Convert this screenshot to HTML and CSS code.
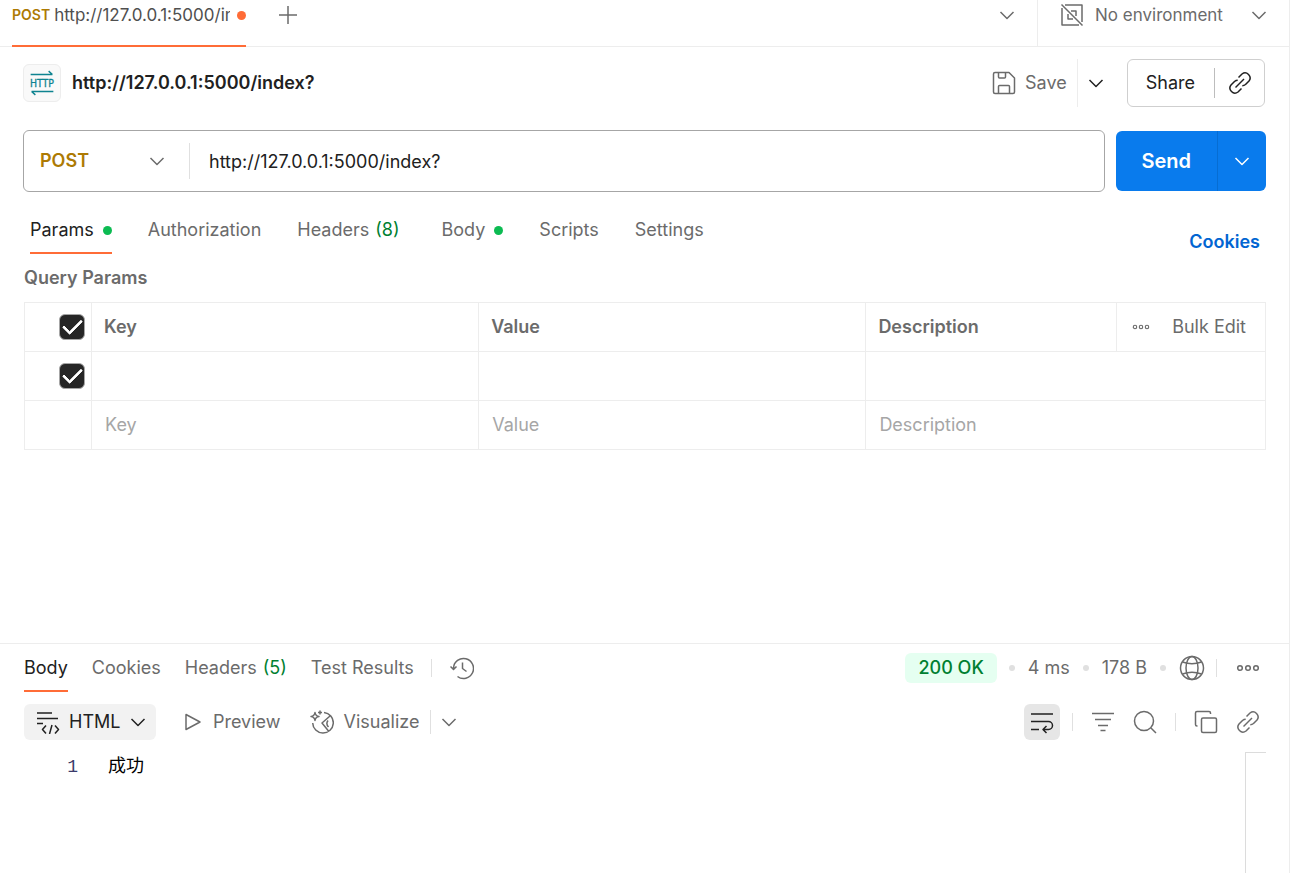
FILE: index.html
```html
<!DOCTYPE html>
<html lang="en">
<head>
    <meta charset="UTF-8">
    <meta name="viewport" content="width=device-width, initial-scale=1.0">
    <title>http://127.0.0.1:5000/index?</title>
    <link rel="stylesheet" href="styles.css">
</head>
<body>
    <!-- shared icons -->
    <svg class="sprite" aria-hidden="true">
        <symbol id="chevron" viewBox="0 0 16 16"><path d="M1.5 5 8 11.5 14.5 5"/></symbol>
        <symbol id="link" viewBox="0 0 24 24">
            <path d="M7.5 16.5 16 8"/>
            <path d="M10.5 6.5 14 3a5 5 0 0 1 7 7l-3.5 3.5q-1.500 1.300-3.200 1.300"/>
            <path d="M13.500 17.500 10 21a5 5 0 0 1-7-7l3.500-3.500q1.500-1.300 3.200-1.300"/>
        </symbol>
        <symbol id="dots" viewBox="0 0 24 24"><circle cx="4" cy="12" r="2.300"/><circle cx="12" cy="12" r="2.300"/><circle cx="20" cy="12" r="2.300"/></symbol>
    </svg>

    <div class="workbench">
        <div class="topbar">
            <div class="tab-strip">
                <a class="file-tab" href="#request">
                    <span class="tab-method">POST</span>
                    <span class="tab-name">http://127.0.0.1:5000/index?</span>
                    <span class="unsaved"></span>
                </a>
            </div>
            <button class="icon-btn new-tab" aria-label="New tab">
                <svg class="icon icon-20" viewBox="0 0 20 20"><path d="M10 1v18M1 10h18"/></svg>
            </button>
            <button class="icon-btn tab-list" aria-label="All tabs"><svg class="icon icon-16"><use href="#chevron"/></svg></button>
            <div class="environment">
                <svg class="icon icon-24" viewBox="0 0 24 24">
                    <path d="M1.500 1.500 22.500 22.500M5 2h17v17M2 5v17h17M11 8h5v5M8 11v5h5"/>
                </svg>
                <label class="select-box env-select">
                    <select aria-label="Environment"><option>No environment</option></select>
                    <svg class="icon icon-16"><use href="#chevron"/></svg>
                </label>
            </div>
        </div>

        <main class="request" id="request">
            <header class="request-header">
                <svg class="http-icon" viewBox="0 0 38 38">
                    <path d="M7 10h23M26 6.500l4 3.500M31 28H8M12 31.500l-4-3.500"/>
                    <text x="19" y="23" text-anchor="middle">HTTP</text>
                </svg>
                <h1>http://127.0.0.1:5000/index?</h1>
                <button class="save">
                    <svg class="icon icon-24" viewBox="0 0 24 24">
                        <path d="M3 1.500h14l5.500 5.500v14q0 1.500-1.500 1.500H3q-1.500 0-1.500-1.500V3Q1.500 1.500 3 1.500ZM6.500 1.500v4.500q0 1 1 1h5q1 0 1-1V1.500M6.500 22.500v-7q0-1 1-1h9q1 0 1 1v7"/>
                    </svg>
                    Save
                </button>
                <button class="icon-btn save-more" aria-label="Save options"><svg class="icon icon-16"><use href="#chevron"/></svg></button>
                <div class="share">
                    <button>Share</button>
                    <button class="icon-btn copy-link" aria-label="Copy link"><svg class="icon icon-24"><use href="#link"/></svg></button>
                </div>
            </header>

            <form class="url-row" onsubmit="return false">
                <div class="url-bar">
                    <label class="select-box method-select">
                        <select aria-label="Method"><option>POST</option><option>GET</option></select>
                        <svg class="icon icon-16"><use href="#chevron"/></svg>
                    </label>
                    <input type="text" aria-label="Request URL" value="http://127.0.0.1:5000/index?">
                </div>
                <div class="send">
                    <button type="submit">Send</button>
                    <button type="button" class="send-more" aria-label="Send options"><svg class="icon icon-16"><use href="#chevron"/></svg></button>
                </div>
            </form>

            <nav class="request-nav">
                <button class="nav-tab active">Params <span class="dot"></span></button>
                <button class="nav-tab">Authorization</button>
                <button class="nav-tab">Headers <span class="count">(8)</span></button>
                <button class="nav-tab">Body <span class="dot"></span></button>
                <button class="nav-tab">Scripts</button>
                <button class="nav-tab">Settings</button>
                <a class="cookies" href="#cookies">Cookies</a>
            </nav>

            <section class="params">
                <h2>Query Params</h2>
                <table>
                    <colgroup>
                        <col class="col-check"><col class="col-key"><col class="col-key"><col><col class="col-bulk">
                    </colgroup>
                    <thead>
                        <tr>
                            <th class="check"><input type="checkbox" aria-label="Select all" checked></th>
                            <th>Key</th>
                            <th>Value</th>
                            <th>Description</th>
                            <th>
                                <div class="bulk">
                                    <button class="icon-btn" aria-label="More"><svg class="icon icon-18"><use href="#dots"/></svg></button>
                                    <button>Bulk Edit</button>
                                </div>
                            </th>
                        </tr>
                    </thead>
                    <tbody>
                        <tr>
                            <td class="check"><input type="checkbox" aria-label="Enable param" checked></td>
                            <td><input type="text" aria-label="Key"></td>
                            <td><input type="text" aria-label="Value"></td>
                            <td colspan="2"><input type="text" aria-label="Description"></td>
                        </tr>
                        <tr>
                            <td></td>
                            <td><input type="text" aria-label="New key" placeholder="Key"></td>
                            <td><input type="text" aria-label="New value" placeholder="Value"></td>
                            <td colspan="2"><input type="text" aria-label="New description" placeholder="Description"></td>
                        </tr>
                    </tbody>
                </table>
            </section>
        </main>

        <section class="response">
            <div class="response-head">
                <nav class="response-nav">
                    <button class="nav-tab active">Body</button>
                    <button class="nav-tab">Cookies</button>
                    <button class="nav-tab">Headers <span class="count">(5)</span></button>
                    <button class="nav-tab">Test Results</button>
                </nav>
                <span class="divider"></span>
                <button class="icon-btn history" aria-label="History">
                    <svg class="icon icon-24" viewBox="0 0 24 24">
                        <path d="M3.500 13V12A10 10 0 1 1 7.500 20.500M.500 10.500l3 3 3-3M12.500 6.500v6l4 3"/>
                    </svg>
                </button>
                <div class="status">
                    <span class="badge">200 OK</span>
                    <span class="sep"></span>
                    <span>4 ms</span>
                    <span class="sep"></span>
                    <span>178 B</span>
                    <span class="sep"></span>
                    <button class="icon-btn network" aria-label="Network">
                        <svg class="icon icon-26" viewBox="0 0 26 26">
                            <circle cx="13" cy="13" r="11.500"/><ellipse cx="13" cy="13" rx="6" ry="11.500"/>
                            <path d="M3.500 7q9.500 3.500 19 0M3.500 19q9.500-3.500 19 0"/>
                        </svg>
                    </button>
                    <span class="divider"></span>
                    <button class="icon-btn more" aria-label="More actions"><svg class="icon icon-24"><use href="#dots"/></svg></button>
                </div>
            </div>

            <div class="toolbar">
                <div class="format">
                    <svg class="icon icon-24" viewBox="0 0 24 24">
                        <path d="M1 3h15M1 8.500h21M1 13.500h6M10 15.500l-3.500 4 3.500 4M19 15.500l3.500 4-3.500 4M16 15l-2.500 9"/>
                    </svg>
                    <label class="select-box format-select">
                        <select aria-label="Format"><option>HTML</option><option>JSON</option></select>
                        <svg class="icon icon-16"><use href="#chevron"/></svg>
                    </label>
                </div>
                <button class="preview">
                    <svg class="icon icon-20" viewBox="0 0 20 20"><path d="M3 2.500v15L17 10Z"/></svg>
                    Preview
                </button>
                <button class="visualize">
                    <svg class="icon icon-24" viewBox="0 0 24 24">
                        <path d="M14 2.500A10.300 10.300 0 1 1 2.700 13M5 2.500Q5.500 6 9 6.500 5.500 7 5 10.500 4.500 7 1 6.500 4.500 6 5 2.500ZM10 .500v4M8 2.500h4M20 6l-8 7 6.500 8M18 10.500q-2.500 3.500.500 6.500"/>
                    </svg>
                    Visualize
                </button>
                <span class="divider tall"></span>
                <button class="icon-btn view-more" aria-label="View options"><svg class="icon icon-16"><use href="#chevron"/></svg></button>
                <div class="tools">
                    <button class="icon-btn wrap active" aria-label="Wrap lines">
                        <svg class="icon icon-24" viewBox="0 0 24 24"><path d="M1 4h22M1 11.500h17.500a4 4 0 0 1 0 8H13M1 19.500h8M16.500 16l-3.500 3.500 3.500 3.500"/></svg>
                    </button>
                    <span class="divider"></span>
                    <button class="icon-btn filter" aria-label="Filter">
                        <svg class="icon icon-24" viewBox="0 0 24 24"><path d="M1 3.500h22M4 9.500h16M7 15.500h10M9.500 20.500h5"/></svg>
                    </button>
                    <button class="icon-btn search" aria-label="Search">
                        <svg class="icon icon-24" viewBox="0 0 24 24"><circle cx="11" cy="11" r="9.500"/><path d="m18 18 5 5"/></svg>
                    </button>
                    <span class="divider"></span>
                    <button class="icon-btn copy" aria-label="Copy">
                        <svg class="icon icon-24" viewBox="0 0 24 24"><rect x="7.500" y="8" width="15" height="14.500" rx="1.500"/><path d="M3.500 16H3q-1.500 0-1.500-1.500V3Q1.500 1.500 3 1.500h12q1.500 0 1.500 1.500v1"/></svg>
                    </button>
                    <button class="icon-btn" aria-label="Copy link"><svg class="icon icon-24"><use href="#link"/></svg></button>
                </div>
            </div>

            <div class="code">
                <span class="line-number">1</span>
                <code>成功</code>
                <div class="minimap"></div>
            </div>
        </section>
    </div>
</body>
</html>
```
FILE: styles.css
```css
* {
    box-sizing: border-box;
}
body {
    margin: 0;
    padding-right: 15px;
    background: #fff;
    color: #212121;
    font: 18px/24px Inter, "Noto Sans CJK SC", sans-serif;
}
button, input, select {
    font: inherit;
    color: inherit;
    background: none;
    border: none;
    padding: 0;
    margin: 0;
}
button, select {
    cursor: pointer;
}
h1, h2 {
    margin: 0;
    font-size: 18px;
    font-weight: 600;
}
.sprite {
    display: none;
}
.icon {
    display: block;
    flex: none;
    width: 24px;
    height: 24px;
    fill: none;
    stroke: currentColor;
    stroke-width: 1.5;
    stroke-linejoin: round;
}
.icon-16 {
    width: 16px;
    height: 16px;
}
.icon-18 {
    width: 18px;
    height: 18px;
}
.icon-20 {
    width: 20px;
    height: 20px;
}
.icon-26 {
    width: 26px;
    height: 26px;
}
.icon-btn {
    display: flex;
    align-items: center;
    justify-content: center;
}
.divider {
    width: 1px;
    height: 18px;
    background: #e0e0e0;
}
.divider.tall {
    height: 24px;
}

/* select with its own chevron */
.select-box {
    display: grid;
    align-items: center;
}
.select-box select, .select-box .icon {
    grid-area: 1 / 1;
}
.select-box select {
    appearance: none;
    width: 100%;
    outline: none;
}
.select-box .icon {
    justify-self: end;
    pointer-events: none;
}

.workbench {
    display: flex;
    flex-direction: column;
    min-height: 100vh;
    border-right: 1px solid #ededed;
}

/* top bar */
.topbar {
    display: flex;
    height: 47px;
    border-bottom: 1px solid #ededed;
    color: #6b6b6b;
}
.topbar .icon-btn {
    height: 30px;
}
.tab-strip {
    width: 258px;
    height: 47px;
    padding: 0 12px;
    border-bottom: 1px solid #ededed;
}
.file-tab {
    display: flex;
    height: 47px;
    padding-top: 3px;
    gap: 4px;
    border-bottom: 2px solid #ff6c37;
    text-decoration: none;
    color: #4f4f4f;
}
.tab-method {
    color: #ad7a03;
    font-size: 14px;
    font-weight: 600;
}
.tab-name {
    flex: 1;
    margin-right: 3px;
    overflow: hidden;
    white-space: nowrap;
    font-size: 17px;
}
.unsaved {
    width: 9px;
    height: 9px;
    margin-top: 8px;
    border-radius: 50%;
    background: #ff6c37;
}
.new-tab {
    margin-left: 20px;
}
.tab-list {
    margin-left: auto;
    margin-right: 22px;
}
.environment {
    display: flex;
    align-items: flex-start;
    gap: 11px;
    width: 252px;
    padding: 3px 22px;
    border-left: 1px solid #ededed;
}
.env-select {
    flex: 1;
    font-size: 17px;
}

/* request */
.request {
    flex: 1;
}
.request-header {
    display: flex;
    align-items: center;
    height: 72px;
    padding: 0 24px 0 23px;
}
.http-icon {
    width: 38px;
    height: 38px;
    margin-right: 11px;
    border: 1px solid #ededed;
    border-radius: 6px;
    background: #f9f9f9;
    fill: none;
    stroke: #0e8390;
    stroke-width: 1.5;
}
.http-icon text {
    font: 11px "DejaVu Sans Condensed", "DejaVu Sans", sans-serif;
    fill: #0e8390;
    stroke: #0e8390;
    stroke-width: 0.3;
}
.save {
    display: flex;
    align-items: center;
    gap: 9px;
    margin-left: auto;
    padding-right: 10px;
    color: #6b6b6b;
}
.save-more {
    width: 38px;
    height: 48px;
    border-left: 1px solid #ededed;
}
.share {
    display: flex;
    align-items: center;
    height: 48px;
    margin-left: 12px;
    border: 1px solid #cfcfcf;
    border-radius: 6px;
}
.share button {
    padding: 0 19px 0 18px;
}
.share .copy-link {
    height: 30px;
    padding: 0 12px 0 13px;
    border-left: 1px solid #bdbdbd;
}
.url-row {
    display: flex;
    align-items: center;
    gap: 11px;
    padding: 11px 23px 0;
}
.url-bar {
    display: flex;
    align-items: center;
    flex: 1;
    height: 62px;
    border: 1px solid #a6a6a6;
    border-radius: 6px;
}
.url-bar input {
    flex: 1;
    height: 36px;
    padding: 0 19px;
    border-left: 1px solid #e0e0e0;
    outline: none;
}
.method-select {
    width: 165px;
    padding: 0 24px 0 16px;
}
.method-select select {
    color: #ad7a03;
    font-weight: 600;
}
.method-select .icon {
    color: #6b6b6b;
}
.send {
    display: flex;
    height: 60px;
    border-radius: 6px;
    overflow: hidden;
    background: #097bed;
    color: #fff;
}
.send button {
    padding: 0 26px 0 25px;
    font-size: 20px;
    font-weight: 600;
}
.send .send-more {
    padding: 0 16px;
    border-left: 1px solid #066dd3;
}

/* tabs */
.request-nav {
    display: flex;
    align-items: flex-end;
    gap: 36px;
    height: 62px;
    padding: 0 29px 0 30px;
}
.nav-tab {
    display: flex;
    align-items: center;
    gap: 6px;
    padding-bottom: 10px;
    border-bottom: 2px solid transparent;
    color: #6b6b6b;
    white-space: nowrap;
}
.nav-tab.active {
    color: #212121;
    border-color: #ff6c37;
}
.count {
    color: #007f31;
}
.request-nav .count {
    padding-right: 6px;
}
.dot {
    width: 9px;
    height: 9px;
    margin-left: 3px;
    border-radius: 50%;
    background: #0cbb52;
}
.cookies {
    margin-left: auto;
    color: #0265d2;
    font-weight: 600;
    text-decoration: none;
}

/* query params */
.params {
    padding: 12px 23px 0 24px;
    color: #6b6b6b;
}
table {
    width: 100%;
    margin-top: 12px;
    border-collapse: collapse;
    table-layout: fixed;
}
.col-check {
    width: 67px;
}
.col-key {
    width: 31.2%;
}
.col-bulk {
    width: 149px;
}
th, td {
    height: 49px;
    padding: 0 12px;
    border: 1px solid #ededed;
    text-align: left;
    font-weight: 600;
}
td input[type="text"] {
    display: block;
    width: 100%;
    padding-left: 1px;
    font-weight: 400;
    outline: none;
}
input::placeholder {
    color: #a6a6a6;
    opacity: 1;
}
.check {
    padding: 0 6px;
}
input[type="checkbox"] {
    appearance: none;
    display: grid;
    place-items: center;
    width: 26px;
    height: 26px;
    margin-left: auto;
    border: 1px solid #a6a6a6;
    border-radius: 6px;
}
input[type="checkbox"]:checked {
    background: #262626;
}
input[type="checkbox"]:checked::before {
    content: "";
    width: 16px;
    height: 8px;
    margin-bottom: 6px;
    border: solid #fff;
    border-width: 0 0 3px 3px;
    border-radius: 1px;
    transform: rotate(-45deg);
}
.bulk {
    display: flex;
    align-items: center;
    justify-content: space-between;
    padding: 0 7px 0 3px;
    font-weight: 400;
}

/* response */
.response {
    display: flex;
    flex-direction: column;
    min-height: 230px;
    border-top: 1px solid #ededed;
    color: #6b6b6b;
}
.response-head {
    display: flex;
    align-items: flex-start;
    padding: 12px 29px 0 24px;
}
.response-nav {
    display: flex;
    gap: 24px;
    margin-right: 17px;
}
.response-head .divider {
    margin-top: 3px;
}
.history {
    margin-left: 18px;
}
.status {
    display: flex;
    align-items: center;
    gap: 13px;
    height: 24px;
    margin-left: auto;
}
.status .divider {
    margin-top: 0;
}
.network {
    margin-right: -2px;
}
.more {
    margin-left: 6px;
}
.badge {
    margin-right: -1px;
    padding: 3px 13px;
    border-radius: 6px;
    background: #e5fff1;
    color: #007f31;
    font-weight: 500;
}
.sep {
    width: 6px;
    height: 6px;
    border-radius: 50%;
    background: #e0e0e0;
}
.toolbar {
    display: flex;
    align-items: center;
    height: 36px;
    margin-top: 12px;
    padding: 0 29px 0 24px;
}
.format {
    display: flex;
    align-items: center;
    gap: 9px;
    height: 36px;
    padding: 0 10px 0 12px;
    border-radius: 6px;
    background: #f2f2f2;
    color: #212121;
}
.format-select select {
    padding-right: 25px;
}
.preview, .visualize {
    display: flex;
    align-items: center;
    gap: 10px;
}
.preview {
    margin-left: 27px;
}
.visualize {
    margin: 0 11px 0 29px;
}
.view-more {
    margin-left: 10px;
}
.tools {
    display: flex;
    align-items: center;
    gap: 18px;
    margin-left: auto;
}
.tools .wrap {
    width: 36px;
    height: 36px;
    margin-right: -6px;
    border-radius: 6px;
    background: #e6e6e6;
    color: #212121;
}
.code {
    display: flex;
    flex: 1;
    margin-top: 12px;
    padding-right: 23px;
    line-height: 30px;
    color: #000;
}
.line-number {
    width: 78px;
    text-align: right;
    font-family: "Liberation Mono", monospace;
    color: #3b3b6b;
}
code {
    flex: 1;
    padding-left: 30px;
    font-family: "Liberation Mono", "Noto Sans CJK SC", monospace;
}
.minimap {
    width: 21px;
    border: solid #dcdcdc;
    border-width: 1px 0 0 1px;
}
```
